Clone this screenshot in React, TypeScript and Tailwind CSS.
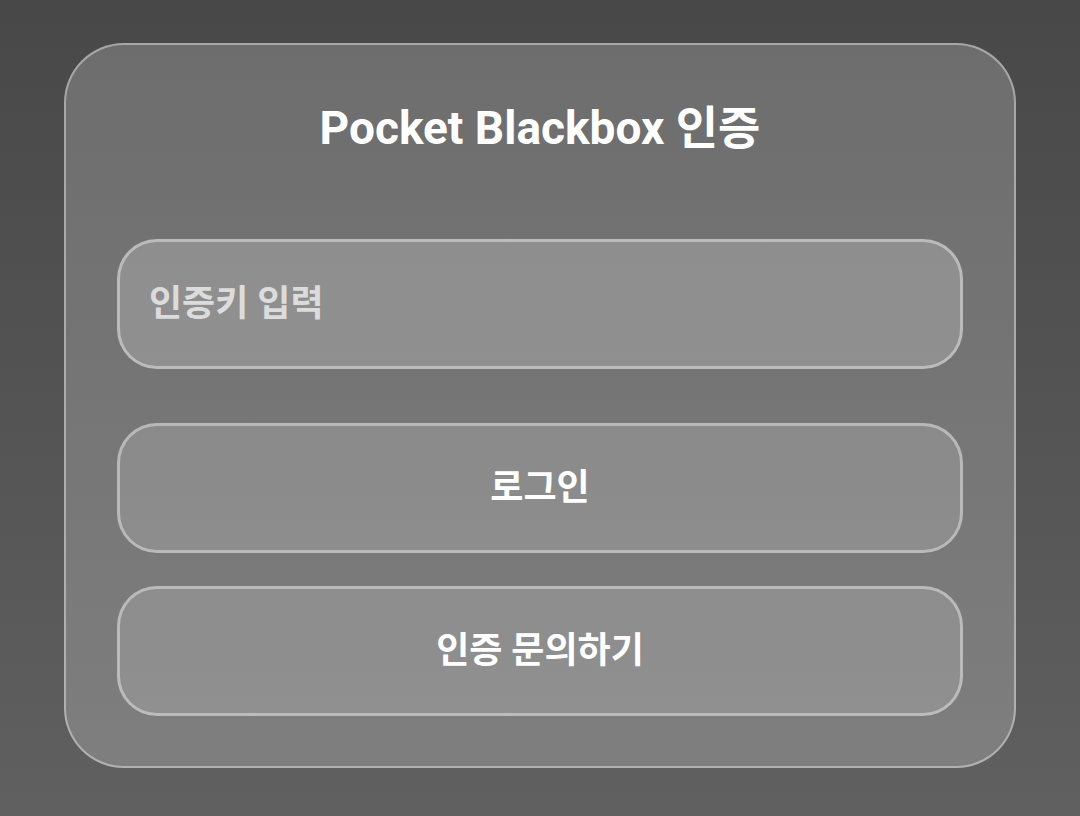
export default function App() {
  return (
    <div
      className="min-h-screen w-full bg-gradient-to-b from-[#484848] to-[#606060] px-[64px] pt-[43px]"
      style={{ fontFamily: 'Roboto, "Noto Sans CJK KR", sans-serif' }}
    >
      <div className="flex h-[725px] w-[952px] flex-col rounded-[60px] border-2 border-white/40 bg-white/20 px-[51px]">
        <h1 className="mt-[56px] text-center text-[46px] font-bold leading-[54px] text-white">
          Pocket Blackbox 인증
        </h1>

        <input
          type="text"
          placeholder="인증키 입력"
          className="mt-[84px] h-[130px] w-full rounded-[40px] border-[3px] border-white/40 bg-white/20 px-[29px] text-[36px] font-bold text-white placeholder:text-[#dcdcdc] focus:outline-none"
        />

        <button className="mt-[54px] h-[130px] w-full rounded-[40px] border-[3px] border-white/40 bg-white/15 text-[36px] font-bold text-white">
          로그인
        </button>

        <button className="mt-[33px] h-[130px] w-full rounded-[40px] border-[3px] border-white/40 bg-white/15 text-[36px] font-bold text-white">
          인증 문의하기
        </button>
      </div>
    </div>
  );
}
